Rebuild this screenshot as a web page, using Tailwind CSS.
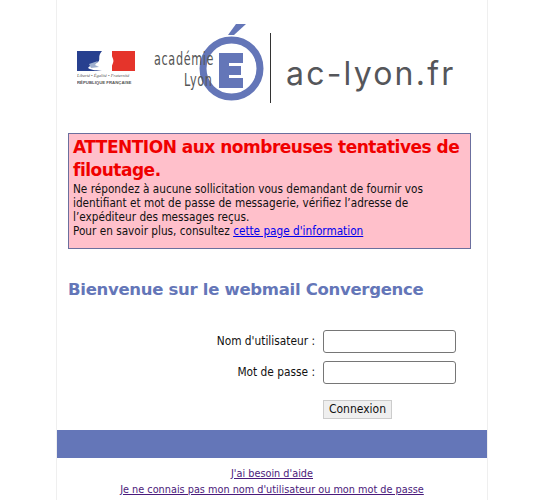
<!DOCTYPE html>
<html lang="fr">
<head>
  <meta charset="UTF-8" />
  <title>Webmail Convergence</title>
  <script src="https://cdn.jsdelivr.net/npm/@tailwindcss/browser@4"></script>
</head>
<body class="bg-white h-[500px] overflow-hidden font-['DejaVu_Sans',sans-serif] text-[#111]">
  <div class="w-[432px] h-[500px] ml-[56px] bg-white border-x border-[#efefef] overflow-hidden">
    <!-- Logos -->
    <header class="h-[133px] pt-[24px] pl-[20px] flex items-start">
      <svg width="60" height="40" viewBox="0 0 60 40" class="mt-[27px] shrink-0">
        <rect x="0" y="0" width="25" height="20" fill="#27408f" />
        <rect x="35" y="0" width="23" height="20" fill="#e5342b" />
        <path d="M25 0 C20 6 24 8 21 11 C17 14 13 14 11 17 C16 20 20 19 25 20 Z" fill="#fff" />
        <path d="M12 13 l9 -3 l-3 4 l4 2 l-8 1 Z" fill="#9fb0cf" />
        <path d="M35 0 C33 5 38 8 36 12 C35 16 32 18 31 20 L35 20 Z" fill="#fff" />
        <text x="0" y="26" font-size="4.5" font-family="Liberation Serif" font-style="italic" fill="#555">Liberté • Égalité • Fraternité</text>
        <text x="0" y="33" font-size="4.3" font-family="Liberation Sans" font-weight="700" fill="#555">RÉPUBLIQUE FRANÇAISE</text>
      </svg>
      <div class="relative w-[118px] h-[82px] ml-[16px] shrink-0">
        <svg width="70" height="80" viewBox="0 0 70 80" class="absolute left-[44px] top-0">
          <path d="M31 11 L39 0 L49 0 L37 11 Z" fill="#6476b8" />
          <circle cx="34.5" cy="44.5" r="28.5" fill="none" stroke="#6476b8" stroke-width="7" />
          <path d="M22 29 H46 V39 H32 V42 H44 V51 H32 V54 H46 V64 H22 Z" fill="#6476b8" />
        </svg>
        <span class="absolute left-[1px] top-[25px] text-[17px] leading-[20px] text-[#555] scale-x-[0.66] origin-left tracking-[1px] whitespace-nowrap">académie</span>
        <span class="absolute left-[31px] top-[46px] text-[17px] leading-[20px] text-[#555] scale-x-[0.66] origin-left tracking-[1px] whitespace-nowrap">Lyon</span>
      </div>
      <div class="w-px h-[70px] bg-[#333] ml-[-1px] mt-[9px] shrink-0"></div>
      <span class="ml-[15px] mt-[28px] text-[32px] leading-[44px] text-[#55565a] font-['Inter',sans-serif] tracking-[2.2px] whitespace-nowrap">ac-lyon.fr</span>
    </header>

    <!-- Alerte -->
    <section class="w-[403px] h-[116px] ml-[11px] bg-[#ffc0cb] border border-[#6b6f9e] px-[4px] pt-[2px]">
      <h2 class="text-[17px] leading-[23px] tracking-[-0.5px] font-bold text-[#f00000]">ATTENTION aux nombreuses tentatives de filoutage.</h2>
      <p class="text-[11.7px] leading-[14px] font-['DejaVu_Sans_Condensed','DejaVu_Sans',sans-serif]">Ne répondez à aucune sollicitation vous demandant de fournir vos identifiant et mot de passe de messagerie, vérifiez l’adresse de l’expéditeur des messages reçus.<br />Pour en savoir plus, consultez <a href="#" class="text-[#0000ee] underline">cette page d'information</a></p>
    </section>

    <h1 class="ml-[11px] mt-[29px] text-[16.5px] leading-[24px] tracking-[-0.3px] font-bold text-[#6476b8]">Bienvenue sur le webmail Convergence</h1>

    <!-- Formulaire -->
    <form class="mt-[28px] text-[11.8px] font-['DejaVu_Sans_Condensed','DejaVu_Sans',sans-serif]">
      <div class="flex items-center h-[23px]">
        <label class="w-[258px] text-right">Nom d'utilisateur :</label>
        <input type="text" class="ml-[8px] w-[133px] h-[23px] bg-white border border-[#767676] rounded-[3px]" />
      </div>
      <div class="flex items-center h-[23px] mt-[8px]">
        <label class="w-[258px] text-right">Mot de passe :</label>
        <input type="password" class="ml-[8px] w-[133px] h-[23px] bg-white border border-[#767676] rounded-[3px]" />
      </div>
      <button type="button" class="block ml-[266px] mt-[16px] w-[69px] h-[19px] bg-[#efefef] border border-[#cccccc] text-[12px] leading-[17px]">Connexion</button>
    </form>

    <div class="h-[28px] mt-[11px] bg-[#6476b8]"></div>

    <!-- Liens -->
    <footer class="mt-[8px] text-center text-[10.8px] leading-[16px] font-['DejaVu_Sans_Condensed','DejaVu_Sans',sans-serif] text-[#4b1a7b]">
      <a href="#" class="underline">J'ai besoin d'aide</a><br />
      <a href="#" class="underline">Je ne connais pas mon nom d'utilisateur ou mon mot de passe</a>
    </footer>
  </div>
</body>
</html>
